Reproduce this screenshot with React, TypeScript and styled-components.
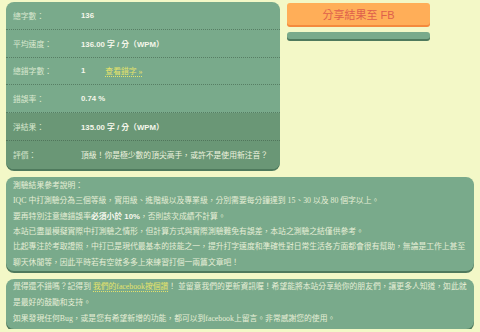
import React from "react";
import styled, { createGlobalStyle } from "styled-components";

const GlobalStyle = createGlobalStyle`
  html, body {
    margin: 0;
    padding: 0;
    background: #f3f8c7;
  }
  body {
    font-family: "Liberation Serif", "Noto Sans CJK TC", serif;
    font-size: 7.8px;
    color: #eef3df;
  }
`;

const Page = styled.div`
  padding: 2px 6px 0;
  display: flex;
  flex-direction: column;
  gap: 8px;
`;

const TopRow = styled.div`
  display: flex;
  align-items: flex-start;
  gap: 7px;
`;

const ResultCard = styled.div`
  width: 274px;
  background: #79aa8b;
  border-radius: 8px;
  overflow: hidden;
  box-shadow: 0 2px 0 #4f7a5d;
`;

const ResultRow = styled.div<{ $dark?: boolean }>`
  display: grid;
  grid-template-columns: 68px 1fr;
  align-items: center;
  height: 27.8px;
  box-sizing: border-box;
  padding: 0 7px;
  background: ${(p) => (p.$dark ? "#6a9776" : "transparent")};
  border-bottom: 1px dotted rgba(60, 90, 70, 0.55);

  &:last-child {
    border-bottom: none;
  }
`;

const Label = styled.span`
  color: #d9e8cf;
`;

const Cell = styled.div`
  display: flex;
  align-items: center;
`;

const Value = styled.span`
  font-family: "Liberation Sans", "Noto Sans CJK TC", sans-serif;
  font-weight: bold;
  color: #f5f6ea;
`;

const Comment = styled.span`
  color: #eef3df;
`;

const Link = styled.a<{ $gap?: number }>`
  color: #e6e36a;
  text-decoration: none;
  border-bottom: 1px dotted #e6e36a;
  margin-left: ${(p) => p.$gap ?? 0}px;
`;

const Side = styled.div`
  width: 143px;
  display: flex;
  flex-direction: column;
  gap: 7px;
  padding-top: 1px;
`;

const ShareButton = styled.div`
  height: 22px;
  border-radius: 3px;
  background: #ffae58;
  box-shadow: 0 2px 0 #f48a3c;
  color: #de5f4c;
  font-family: "Liberation Sans", "Noto Sans CJK TC", sans-serif;
  font-size: 11px;
  display: flex;
  align-items: center;
  justify-content: center;
`;

const Bar = styled.div`
  height: 7px;
  border-radius: 3px;
  background: #79aa8b;
  box-shadow: 0 2px 0 #4f7a5d;
`;

const Note = styled.div<{ $lh?: number; $pad?: string }>`
  background: #79aa8b;
  border-radius: 8px;
  box-shadow: 0 2px 0 #4f7a5d;
  padding: ${(p) => p.$pad ?? "1px 7px"};
  line-height: ${(p) => p.$lh ?? 15.4}px;
  color: #e6eed6;

  strong {
    font-family: "Liberation Sans", "Noto Sans CJK TC", sans-serif;
    color: #f8f8ee;
  }
`;

type Row = {
  label: string;
  value: React.ReactNode;
  dark?: boolean;
};

export default function App() {
  const rows: Row[] = [
    { label: "總字數：", value: <Value>136</Value> },
    { label: "平均速度：", value: <Value>136.00 字 / 分（WPM）</Value> },
    {
      label: "總錯字數：",
      value: (
        <>
          <Value>1</Value>
          <Link href="#" $gap={20}>
            查看錯字 »
          </Link>
        </>
      ),
    },
    { label: "錯誤率：", value: <Value>0.74 %</Value> },
    { label: "淨結果：", value: <Value>135.00 字 / 分（WPM）</Value>, dark: true },
    {
      label: "評價：",
      value: <Comment>頂級！你是極少數的頂尖高手，或許不是使用新注音？</Comment>,
      dark: true,
    },
  ];

  return (
    <Page>
      <GlobalStyle />
      <TopRow>
        <ResultCard>
          {rows.map((row) => (
            <ResultRow key={row.label} $dark={row.dark}>
              <Label>{row.label}</Label>
              <Cell>{row.value}</Cell>
            </ResultRow>
          ))}
        </ResultCard>
        <Side>
          <ShareButton>分享結果至 FB</ShareButton>
          <Bar />
        </Side>
      </TopRow>

      <Note>
        測驗結果參考說明：
        <br />
        IQC 中打測驗分為三個等級，實用級、進階級以及專業級，分別需要每分鐘達到 15、30 以及 80 個字以上。
        <br />
        要再特別注意總錯誤率<strong>必須小於 10%</strong>，否則該次成績不計算。
        <br />
        本站已盡量模擬實際中打測驗之情形，但計算方式與實際測驗難免有誤差，本站之測驗之結僅供參考。
        <br />
        比起專注於考取證照，中打已是現代最基本的技能之一，提升打字速度和準確性對日常生活各方面都會很有幫助，無論是工作上甚至聊天休閒等，因此平時若有空就多多上來練習打個一兩篇文章吧！
      </Note>

      <Note $lh={16} $pad="0 7px 2px">
        覺得還不錯嗎？記得到 <Link href="#">我們的facebook按個讚</Link>！ 並留意我們的更新資訊喔！希望能將本站分享給你的朋友們，讓更多人知道，如此就是最好的鼓勵和支持。
        <br />
        如果發現任何Bug，或是您有希望新增的功能，都可以到facebook上留言。非常感謝您的使用。
      </Note>
    </Page>
  );
}
